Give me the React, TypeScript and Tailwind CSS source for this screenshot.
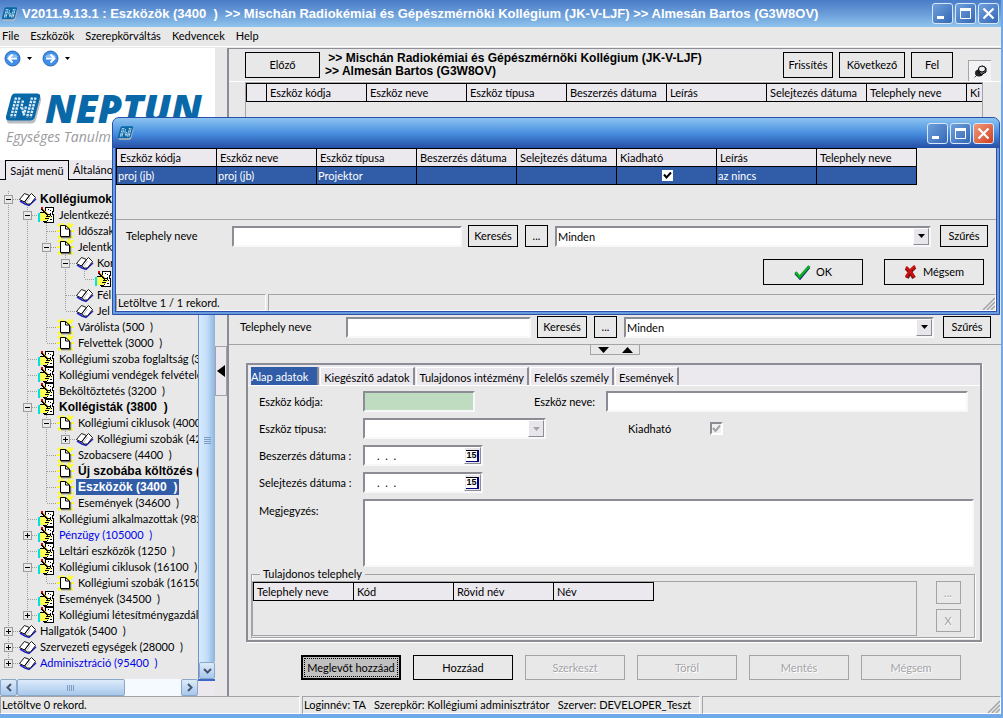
import React from "react";

type IconKind = "book" | "form" | "page";

type TreeNode = {
    level: number;
    icon: IconKind;
    label: string;
    toggle?: "+" | "-";
    tone?: "bold" | "blue" | "selected";
};

const TREE: TreeNode[] = [
    { level: 0, icon: "book", label: "Kollégiumok", toggle: "-", tone: "bold" },
    { level: 1, icon: "form", label: "Jelentkezés", toggle: "-" },
    { level: 2, icon: "page", label: "Időszak" },
    { level: 2, icon: "page", label: "Jelentk", toggle: "-" },
    { level: 3, icon: "book", label: "Kor", toggle: "-" },
    { level: 4, icon: "form", label: "" },
    { level: 3, icon: "book", label: "Fél" },
    { level: 3, icon: "book", label: "Jel" },
    { level: 2, icon: "page", label: "Várólista (500  )" },
    { level: 2, icon: "page", label: "Felvettek (3000  )" },
    { level: 1, icon: "form", label: "Kollégiumi szoba foglaltság (3" },
    { level: 1, icon: "form", label: "Kollégiumi vendégek felvétele" },
    { level: 1, icon: "form", label: "Beköltöztetés (3200  )" },
    { level: 1, icon: "form", label: "Kollégisták (3800  )", toggle: "-", tone: "bold" },
    { level: 2, icon: "page", label: "Kollégiumi ciklusok (4000", toggle: "-" },
    { level: 3, icon: "book", label: "Kollégiumi szobák (42", toggle: "+" },
    { level: 2, icon: "page", label: "Szobacsere (4400  )" },
    { level: 2, icon: "page", label: "Új szobába költözés (", tone: "bold" },
    { level: 2, icon: "page", label: "Eszközök (3400  )", tone: "selected" },
    { level: 2, icon: "page", label: "Események (34600  )" },
    { level: 1, icon: "form", label: "Kollégiumi alkalmazottak (982" },
    { level: 1, icon: "form", label: "Pénzügy (105000  )", toggle: "+", tone: "blue" },
    { level: 1, icon: "form", label: "Leltári eszközök (1250  )" },
    { level: 1, icon: "form", label: "Kollégiumi ciklusok (16100  )", toggle: "-" },
    { level: 2, icon: "page", label: "Kollégiumi szobák (16150" },
    { level: 1, icon: "form", label: "Események (34500  )" },
    { level: 1, icon: "form", label: "Kollégiumi létesítménygazdálk", toggle: "+" },
    { level: 0, icon: "book", label: "Hallgatók (5400  )", toggle: "+" },
    { level: 0, icon: "book", label: "Szervezeti egységek (28000  )", toggle: "+" },
    { level: 0, icon: "book", label: "Adminisztráció (95400  )", toggle: "+", tone: "blue" },
];

const MAIN_COLUMNS = ["Eszköz kódja", "Eszköz neve", "Eszköz típusa", "Beszerzés dátuma", "Leírás", "Selejtezés dátuma", "Telephely neve", "Ki"];
const DIALOG_COLUMNS = ["Eszköz kódja", "Eszköz neve", "Eszköz típusa", "Beszerzés dátuma", "Selejtezés dátuma", "Kiadható", "Leírás", "Telephely neve"];
const SITE_COLUMNS = ["Telephely neve", "Kód", "Rövid név", "Név"];
const TABS = ["Alap adatok", "Kiegészitő adatok", "Tulajdonos intézmény", "Felelős személy", "Események"];
const ACTIONS = ["Meglevőt hozzáad", "Hozzáad", "Szerkeszt", "Töröl", "Mentés", "Mégsem"];

const boldText = "font-['Liberation_Sans',Arial,sans-serif] text-[12px] font-bold";
const sunken = "border-2 border-t-[#8c8c94] border-l-[#8c8c94] border-r-[#f8f8fa] border-b-[#f8f8fa] bg-white";
const flatButton = "flex shrink-0 items-center justify-center border border-black bg-[#e8e8e8] whitespace-nowrap";
const disabledButton = "flex shrink-0 items-center justify-center border border-[#a4a4a8] text-[#a4a4a8] [text-shadow:1px_1px_0_white]";
const headCell = "h-[18px] border border-black bg-[#ebe8ee] p-0 pl-[3px] text-left font-normal whitespace-nowrap overflow-hidden";
const statusCell = "border-t border-l border-t-[#a4a4a8] border-l-[#a4a4a8] border-r border-b border-r-white border-b-white pl-px whitespace-pre";

// does the tree still have a sibling on this level below the given row
function continues(index: number, level: number) {
    for (let i = index + 1; i < TREE.length; i++) {
        if (TREE[i].level < level) return false;
        if (TREE[i].level === level) return true;
    }
    return false;
}

function NeptunMark({ className }: { className: string }) {
    return (
        <svg viewBox="0 0 36 30" className={className} aria-hidden="true">
            <path d="M9 3h23q4 0 3 4l-5 19q-1 4-5 4H4q-4 0-3-4z" fill="#b9bcc0" />
            <path d="M9 0h22q4 0 3 4l-5 19q-1 4-5 4H3q-4 0-3-4L5 4q1-4 4-4z" fill="#0868a8" />
            <g stroke="#dcecf6" strokeWidth="2.4" strokeDasharray="2.4 1" fill="none">
                <path d="M10 4 5 24M13.500 4 8.500 24M17 7l-2 8M20 13l-2 8M26 4l-5 20M29.500 4l-5 20M16 14l2 8" />
            </g>
        </svg>
    );
}

function TreeIcon({ kind }: { kind: IconKind }) {
    if (kind === "book") {
        return (
            <svg width="18" height="16" viewBox="0 0 18 16" className="shrink-0" aria-hidden="true">
                <path d="m1 10 5 3 4 1.500L17 8" fill="none" stroke="#2020d0" strokeWidth="1.500" />
                <path d="M.5 8.500 5.500 2.500l5 2-5 6.500zM10.500 4.500l2-2 4 4-5 6.500h-3l-3-2z" fill="#fff" stroke="#000" strokeWidth=".9" />
                <path d="m11.500 6-4 5.500" stroke="#aaa" strokeWidth=".8" />
            </svg>
        );
    }
    if (kind === "form") {
        return (
            <svg width="18" height="16" viewBox="0 0 18 16" className="shrink-0" shapeRendering="crispEdges" aria-hidden="true">
                <path d="M7.500.5H15.500v4h-1v3h1v8h-9v-10h1z" fill="#fff" stroke="#000" />
                <path d="M10 2.500h1M12 3.500h1M12 6.500h1M13 9.500h1M9 13.500h1M12 12.500h2" stroke="#000" />
                <path d="M0 6h2v9H0z" fill="#00e0e8" />
                <path d="M2 6h6v1h4v2h1v2h-2v2H8v1H2z" fill="#ffff50" />
                <path d="M2 5.500h4M8 7.500h5M8 9.500h4M7 11.500h4M5 14.500h4M12 8.500h1" stroke="#000" />
                <path d="M3 1h1v1h1v1h1v1h1v1h1v1h1v1h1v2h-1V8H8V7H7V6H6V5H5V4H4V3H3z" fill="#000" />
                <path d="M5 2h1v1h1v1h1v1h1v1h1v1H9V6H8V5H7V4H6V3H5z" fill="#f0c000" />
                <path d="M3 0h2v2H3z" fill="#e00000" />
            </svg>
        );
    }
    return (
        <svg width="18" height="16" viewBox="0 0 18 16" className="shrink-0" aria-hidden="true">
            <path d="m1 1 15 14M16 1 1 15M0 8h17M5 0l7 16M12 0 4 16" stroke="#ffff10" strokeWidth="2" />
            <path d="M4 14.500h9.500V7" fill="none" stroke="#777" strokeWidth="1.500" />
            <path d="M3.500 2.500h5L12.500 6v7.500h-9z" fill="#fff" stroke="#000" />
            <path d="M8.500 2.500V6h4" fill="none" stroke="#000" />
        </svg>
    );
}

function TreeRow({ node, index }: { node: TreeNode; index: number }) {
    const tone =
        node.tone === "selected" ? `bg-[#315da8] text-white ${boldText}`
            : node.tone === "bold" ? boldText
                : node.tone === "blue" ? "text-[#0000e8]" : "";
    const more = continues(index, node.level);

    return (
        <li className="flex h-4 items-center">
            {Array.from({ length: node.level }, (_, level) => (
                <svg key={level} width="19" height="16" className="shrink-0" aria-hidden="true">
                    {continues(index, level) && <path d="M8.500 0v16" stroke="#9c9c9c" strokeDasharray="1 1" />}
                </svg>
            ))}
            <svg width="19" height="16" className="shrink-0" aria-hidden="true">
                <path d={more ? "M8.500 0v16" : "M8.500 0v8"} stroke="#9c9c9c" strokeDasharray="1 1" />
                <path d="M9 8.500h10" stroke="#9c9c9c" strokeDasharray="1 1" />
                {node.toggle && (
                    <>
                        <rect x="4.500" y="4.500" width="8" height="8" fill="#e8e8e8" stroke="#9c9c9c" />
                        <path d={node.toggle === "+" ? "M6 8.500h5M8.500 6v5" : "M6 8.500h5"} stroke="#000" />
                    </>
                )}
            </svg>
            <TreeIcon kind={node.icon} />
            <span className={`ml-px px-[2px] leading-4 whitespace-pre ${tone}`}>{node.label}</span>
        </li>
    );
}

function WindowButtons({ close }: { close: string }) {
    const box = "flex h-[21px] w-[21px] items-center justify-center rounded-[3px] border border-[#d8e8fa]";
    return (
        <div className="flex gap-[2px]">
            <button aria-label="Kis méret" className={`${box} bg-linear-to-br from-[#6fa0dc] to-[#3468b4]`}>
                <svg width="15" height="15"><path d="M2 10h7v3H2z" fill="#fff" /></svg>
            </button>
            <button aria-label="Teljes méret" className={`${box} bg-linear-to-br from-[#6fa0dc] to-[#3468b4]`}>
                <svg width="15" height="15"><path d="M2.500 3v9.500h10V3" fill="none" stroke="#fff" /><path d="M2 2h11v3H2z" fill="#fff" /></svg>
            </button>
            <button aria-label="Bezárás" className={`${box} ${close}`}>
                <svg width="15" height="15"><path d="m2.500 2.500 10 10m0-10-10 10" stroke="#fff" strokeWidth="2.200" /></svg>
            </button>
        </div>
    );
}

function Grip() {
    return (
        <svg width="13" height="13" className="self-end" aria-hidden="true">
            <path d="M1 13 13 1M5 13l8-8M9 13l4-4" stroke="#a4a4a8" strokeWidth="1.500" />
        </svg>
    );
}

function Combo({ id, label, value, className, disabled }: { id: string; label?: string; value: string; className: string; disabled?: boolean }) {
    return (
        <div className={`flex h-[21px] ${sunken} ${className}`}>
            <select id={id} aria-label={label} disabled={disabled} className="min-w-0 flex-1 appearance-none bg-white px-px leading-none outline-none">
                <option>{value}</option>
            </select>
            <span className="pointer-events-none flex w-4 items-center justify-center border border-t-white border-l-white border-r-[#8c8c94] border-b-[#8c8c94] bg-[#e8e6ea]">
                <svg width="7" height="4" aria-hidden="true"><path d="M0 0h7L3.500 4z" fill={disabled ? "#a4a4a8" : "#000"} /></svg>
            </span>
        </div>
    );
}

function FilterRow({ id, inputClass, autoFocus }: { id: string; inputClass: string; autoFocus?: boolean }) {
    return (
        <>
            <input id={id} autoFocus={autoFocus} className={`h-[21px] shrink-0 px-px outline-none ${sunken} ${inputClass}`} />
            <button className={`${flatButton} ml-[6px] h-[22px] w-[50px]`}>Keresés</button>
            <button className={`${flatButton} ml-[7px] h-[22px] w-[23px]`}>...</button>
            <Combo id={`${id}-filter`} label="Szűrő" value="Minden" className="ml-[7px] min-w-0 flex-1" />
            <button className={`${flatButton} ml-[9px] h-[22px] w-12`}>Szűrés</button>
        </>
    );
}

function DateField({ id, label }: { id: string; label: string }) {
    return (
        <div className="flex h-[21px] items-center">
            <label htmlFor={id} className="w-[104px]">{label}</label>
            <div className={`flex h-[21px] w-[120px] ${sunken}`}>
                <input id={id} defaultValue=".  .  ." className="w-[99px] pl-3 outline-none" />
                <button aria-label="Naptár" className="flex flex-1 items-center justify-center border border-t-white border-l-white border-r-[#8c8c94] border-b-[#8c8c94] bg-[#e8e6ea]">
                    <span className="flex h-3 items-center border-t border-r-2 border-b border-t-black border-r-[#000080] border-b-[#000080] bg-white font-['Liberation_Sans',Arial,sans-serif] text-[9px] leading-none font-bold">15</span>
                </button>
            </div>
        </div>
    );
}

function NavArrow({ back }: { back?: boolean }) {
    return (
        <div className="flex items-center gap-[6px]">
            <button aria-label={back ? "Vissza" : "Előre"}>
                <svg width="17" height="17" className="block">
                    <circle cx="8.500" cy="8.500" r="7.500" fill="#3f8ee8" stroke="#2f68b8" />
                    <path d="M3 7a6 5 0 0 1 11 0z" fill="#8cc0f4" />
                    <path d={back ? "M13 8.500H5M8.500 4.500l-4 4 4 4" : "M4 8.500h8M8.500 4.500l4 4-4 4"} fill="none" stroke="#fff" strokeWidth="2" />
                </svg>
            </button>
            <svg width="5" height="3" aria-hidden="true"><path d="M0 0h5L2.500 3z" /></svg>
        </div>
    );
}

const scrollPart = "flex items-center justify-center rounded-[2px] border border-[#8ca8c8] bg-linear-to-b from-[#dcebfa] to-[#a8c8ec]";

function Sidebar() {
    return (
        <aside className="flex w-[215px] shrink-0 flex-col">
            <div className="h-28 bg-white">
                <div className="flex gap-[10px] px-1 pt-[2px]">
                    <NavArrow back />
                    <NavArrow />
                </div>
                <div className="mt-[20px] flex items-center gap-[3px] pl-[6px]">
                    <NeptunMark className="h-[31px] w-9" />
                    <span className="font-['Open_Sans',sans-serif] text-[39px] leading-[42px] font-extrabold text-[#0868a8] italic">NEPTUN</span>
                </div>
                <p className="pl-[6px] font-['Open_Sans',sans-serif] text-[14px] leading-4 whitespace-nowrap text-[#9a9a9e] italic">Egységes Tanulm</p>
            </div>
            <div className="flex h-[20px] items-end bg-[#ebe8ee]">
                <span className="h-px w-[5px] bg-black" />
                <button className="h-[20px] w-16 border border-b-0 border-black">Saját menü</button>
                <button className="h-[20px] flex-1 border-b border-black pl-1 text-left">Általáno</button>
            </div>
            <div className="flex flex-1">
                <ul className="w-[198px] overflow-hidden pt-[11px]">
                    {TREE.map((node, i) => <TreeRow key={i} node={node} index={i} />)}
                </ul>
                <div className="flex w-[17px] flex-col border-l border-[#6a94cc]">
                    <div className="flex flex-1 flex-col items-center justify-center bg-linear-to-r from-[#d8eafc] via-[#c4def8] to-[#8cb4e0] pt-10">
                        <svg width="7" height="8" aria-hidden="true"><path d="M0 .5h7M0 2.500h7M0 4.500h7M0 6.500h7" stroke="#7c9cc8" /></svg>
                    </div>
                    <button aria-label="Le" className={`h-[17px] ${scrollPart}`}>
                        <svg width="9" height="6"><path d="m1 1 3.500 3.500L8 1" fill="none" stroke="#46566c" strokeWidth="2" /></svg>
                    </button>
                </div>
            </div>
            <div className="flex h-[17px]">
                <button aria-label="Balra" className={`w-[17px] ${scrollPart}`}>
                    <svg width="6" height="9"><path d="M5 1 1.500 4.500 5 8" fill="none" stroke="#46566c" strokeWidth="2" /></svg>
                </button>
                <div className={`w-[108px] ${scrollPart}`}>
                    <svg width="8" height="6" aria-hidden="true"><path d="M.5 0v6M2.500 0v6M4.500 0v6M6.500 0v6" stroke="#7c9cc8" /></svg>
                </div>
                <div className="flex-1 bg-[#f4faff]" />
                <button aria-label="Jobbra" className={`w-[17px] ${scrollPart}`}>
                    <svg width="6" height="9"><path d="m1 1 3.500 3.500L1 8" fill="none" stroke="#46566c" strokeWidth="2" /></svg>
                </button>
                <span className="w-[17px] border-t-2 border-[#3c68c8] bg-[#ebe8ee]" />
            </div>
        </aside>
    );
}

function DetailTabs() {
    return (
        <section className="mr-[19px] ml-[17px] border-2 border-[#8c8c94] shadow-[1px_1px_0_white]">
            <div role="tablist" className="flex h-[21px] items-end gap-px border-b border-white bg-[#ebe8ee] pl-[3px]">
                {TABS.map((tab, i) => (
                    <button
                        key={tab}
                        role="tab"
                        aria-selected={i === 0}
                        className={i === 0
                            ? "h-[18px] border-r-2 border-[#8c8c94] bg-[#315da8] pr-[9px] leading-none text-white"
                            : "h-[18px] border-t border-l border-r-2 border-t-white border-l-white border-r-[#8c8c94] px-[3px] pt-px leading-none whitespace-nowrap"}
                    >
                        {tab}
                    </button>
                ))}
            </div>
            <div className="flex flex-col gap-[6px] pt-[5px] pr-[6px] pl-[11px]">
                <div className="flex h-[21px] items-center pr-[6px]">
                    <label htmlFor="code" className="w-[104px]">Eszköz kódja:</label>
                    <input id="code" className="h-[21px] w-28 border-2 border-t-[#8c8c94] border-l-[#8c8c94] border-r-[#f8f8fa] border-b-[#f8f8fa] bg-[#c0dcc0]" />
                    <label htmlFor="name" className="ml-[59px] w-[72px]">Eszköz neve:</label>
                    <input id="name" className={`h-[21px] min-w-0 flex-1 ${sunken}`} />
                </div>
                <div className="flex h-[21px] items-center">
                    <label htmlFor="type" className="w-[104px]">Eszköz típusa:</label>
                    <Combo id="type" value="" className="w-[183px]" disabled />
                    <label htmlFor="lendable" className="ml-[82px] w-[82px]">Kiadható</label>
                    <input
                        id="lendable"
                        type="checkbox"
                        defaultChecked
                        disabled
                        className="h-[13px] w-[13px] appearance-none border-2 border-t-[#8c8c94] border-l-[#8c8c94] border-r-white border-b-white bg-[#f0f0f0]"
                    />
                    <svg width="9" height="9" className="pointer-events-none -ml-[11px]" aria-hidden="true"><path d="m1 4 2.500 3L8 1.500" fill="none" stroke="#a4a4a8" strokeWidth="2" /></svg>
                </div>
                <DateField id="bought" label="Beszerzés dátuma :" />
                <DateField id="scrapped" label="Selejtezés dátuma :" />
                <div className="flex">
                    <label htmlFor="note" className="w-[104px] pt-[5px]">Megjegyzés:</label>
                    <textarea id="note" className={`h-[68px] min-w-0 flex-1 resize-none ${sunken}`} />
                </div>
            </div>
            <fieldset className="mr-[5px] mb-[2px] ml-[3px] flex border border-[#a4a4a8] pb-px shadow-[inset_1px_0_0_white,1px_1px_0_white]">
                <legend className="ml-2 px-[3px] leading-[14px]">Tulajdonos telephely</legend>
                <div className="h-[55px] flex-1 border border-[#a4a4a8]">
                    <table className="table-fixed border-collapse">
                        <thead>
                            <tr>{SITE_COLUMNS.map(c => <th key={c} className={`${headCell} w-[100px]`}>{c}</th>)}</tr>
                        </thead>
                    </table>
                </div>
                <div className="flex w-[57px] flex-col items-center gap-[5px] pl-[5px]">
                    <button disabled className={`${disabledButton} h-[23px] w-[25px]`}>...</button>
                    <button disabled className={`${disabledButton} h-[23px] w-[25px]`}>X</button>
                </div>
            </fieldset>
        </section>
    );
}

function MainPanel() {
    return (
        <main className="flex min-w-0 flex-1 flex-col border-t border-l-2 border-[#8c8c94]">
            <div className="flex h-[33px] items-start border-b border-white pt-[3px] pr-[10px] pl-4">
                <button className={`${flatButton} h-[26px] w-[75px]`}>Előző</button>
                <p className={`min-w-0 flex-1 pl-[5px] leading-[13px] whitespace-pre ${boldText}`}>{" >> Mischán Radiokémiai és Gépészmérnöki Kollégium (JK-V-LJF)\n>> Almesán Bartos (G3W8OV)"}</p>
                <button className={`${flatButton} h-[26px] w-[50px]`}>Frissítés</button>
                <button className={`${flatButton} ml-[6px] h-[26px] w-[66px]`}>Következő</button>
                <button className={`${flatButton} ml-[6px] h-[26px] w-[42px]`}>Fel</button>
                <button aria-label="Rögzítés" className="mt-2 ml-[15px] flex h-[21px] w-[23px] items-center justify-center border-t border-l border-[#a4a4a8] bg-[#f3f2f5]">
                    <svg width="14" height="13">
                        <path d="m4.500 9.500-3 3" stroke="#555" />
                        <ellipse cx="6" cy="8" rx="4" ry="3.500" fill="#222" />
                        <path d="M5 5 9 1l4 2v4L8 10z" fill="#777" stroke="#000" />
                        <ellipse cx="9" cy="4" rx="3.500" ry="3" fill="#eee" stroke="#000" />
                    </svg>
                </button>
            </div>
            <div className="mr-[18px] ml-4 h-[228px] overflow-hidden border border-[#a4a4a8]">
                <table className="w-[820px] table-fixed border-collapse">
                    <thead>
                        <tr>
                            <th className={`${headCell} w-[20px]`} />
                            {MAIN_COLUMNS.map(c => <th key={c} className={`${headCell} w-[100px]`}>{c}</th>)}
                        </tr>
                    </thead>
                </table>
            </div>
            <div className="flex h-[35px] items-center border-b border-[#a4a4a8] pr-[10px] pl-[11px]">
                <label htmlFor="site" className="w-[106px] shrink-0">Telephely neve</label>
                <FilterRow id="site" inputClass="w-[185px]" />
            </div>
            <button aria-label="Panel méretezése" className="flex h-[10px] w-[50px] items-center justify-around self-center border border-t-0 border-[#a4a4a8]">
                <svg width="11" height="6"><path d="M0 0h11L5.500 6z" /></svg>
                <svg width="11" height="6"><path d="M0 6h11L5.500 0z" /></svg>
            </button>
            <div className="h-2" />
            <DetailTabs />
            <div className="flex flex-1 items-start gap-3 pt-[13px] pb-[14px] pl-[72px]">
                {ACTIONS.map((action, i) => (
                    <button
                        key={action}
                        disabled={i > 1}
                        className={i === 0
                            ? "flex h-[25px] w-[100px] items-center justify-center border-2 border-black bg-[#c0c0c0] whitespace-nowrap outline-1 -outline-offset-4 outline-black outline-dotted"
                            : i === 1 ? `${flatButton} h-[25px] w-[100px]` : `${disabledButton} h-[25px] w-[100px]`}
                    >
                        {action}
                    </button>
                ))}
            </div>
        </main>
    );
}

function DeviceDialog() {
    return (
        <div role="dialog" aria-label="Eszköz választás" className="absolute top-[117px] right-px left-[112px] rounded-t-[7px] border border-[#2850a8] bg-[#6c9ce0]">
            <div className="flex h-[30px] items-center justify-between rounded-t-[6px] bg-linear-to-b from-[#8cc4f0] via-[#4a90e0] via-50% to-[#264ea6] pr-[5px] pl-[5px]">
                <NeptunMark className="h-[14px] w-4" />
                <WindowButtons close="bg-linear-to-br from-[#f09878] to-[#d03c18]" />
            </div>
            <div className="mx-[2px] mb-[2px] border-x border-b border-[#2850a8] bg-[#e8e8e8]">
                <div className="h-[72px] border-b border-[#a4a4a8]">
                    <table className="w-[801px] table-fixed border-collapse">
                        <thead>
                            <tr>{DIALOG_COLUMNS.map(c => <th key={c} className={headCell}>{c}</th>)}</tr>
                        </thead>
                        <tbody>
                            <tr className="bg-[#315da8] text-white">
                                {["proj (jb)", "proj (jb)", "Projektor", "", "", "check", "az nincs", ""].map((cell, i) => (
                                    <td key={i} className="h-[18px] border border-black p-0 pl-px">
                                        {cell === "check" ? (
                                            <div className="flex justify-center">
                                                <input type="checkbox" defaultChecked aria-label="Kiadható" className="h-[11px] w-[11px] appearance-none bg-white" />
                                                <svg width="9" height="9" className="pointer-events-none mt-px -ml-[10px]" aria-hidden="true"><path d="m1 3.500 2.500 3L8 1.500" fill="none" stroke="#000" strokeWidth="2" /></svg>
                                            </div>
                                        ) : cell}
                                    </td>
                                ))}
                            </tr>
                        </tbody>
                    </table>
                </div>
                <div className="flex items-center pt-[5px] pr-2 pl-[10px]">
                    <label htmlFor="search" className="w-[106px] shrink-0">Telephely neve</label>
                    <FilterRow id="search" inputClass="w-[230px]" autoFocus />
                </div>
                <div className="flex justify-end gap-[21px] pt-3 pr-3 pb-[9px]">
                    <button className={`${flatButton} h-[26px] w-[100px] gap-[5px]`}>
                        <svg width="17" height="15" aria-hidden="true"><path d="m1.500 8 4.500 5L15 2" fill="none" stroke="#103070" strokeWidth="3" /><path d="m1.500 7 4 5L15.500 1" fill="none" stroke="#0cb020" strokeWidth="2.600" /></svg>
                        OK
                    </button>
                    <button className={`${flatButton} h-[26px] w-[100px] gap-[6px]`}>
                        <svg width="13" height="15" aria-hidden="true"><path d="M2 3q5 4 8 10M11 2Q6 6 3 13" fill="none" stroke="#701010" strokeWidth="4" /><path d="M2 2q5 4 8 10M11 1Q6 5 2 12" fill="none" stroke="#d01010" strokeWidth="2.600" /></svg>
                        Mégsem
                    </button>
                </div>
                <div className="flex h-[17px] gap-[2px] leading-4">
                    <span className={`${statusCell} w-[150px]`}>Letöltve 1 / 1 rekord.</span>
                    <span className={`${statusCell} flex flex-1 justify-end`}><Grip /></span>
                </div>
            </div>
        </div>
    );
}

export default function App() {
    return (
        <div className="relative flex min-h-screen flex-col overflow-hidden border-r-2 border-b-4 border-[#70a8e8] bg-[#e8e8e8] font-[Lato,Arial,sans-serif] text-[11px] leading-[14px] text-black">
            <header className="flex h-[27px] items-center justify-between bg-linear-to-b from-[#4a7cc8] via-[#6a9cd8] to-[#90c4ec] pr-[2px] pl-[2px]">
                <div className="flex items-center gap-1">
                    <NeptunMark className="h-[14px] w-4" />
                    <h1 className="font-['Liberation_Sans',Arial,sans-serif] text-[13px] font-bold whitespace-pre text-white">{"V2011.9.13.1 : Eszközök (3400  )  >> Mischán Radiokémiai és Gépészmérnöki Kollégium (JK-V-LJF) >> Almesán Bartos (G3W8OV)"}</h1>
                </div>
                <WindowButtons close="bg-linear-to-br from-[#6fa0dc] to-[#3468b4]" />
            </header>
            <nav className="flex h-5 items-center gap-[11px] border-b border-white pb-px pl-[2px]">
                {["File", "Eszközök", "Szerepkörváltás", "Kedvencek", "Help"].map(item => <button key={item}>{item}</button>)}
            </nav>
            <div className="flex flex-1 pt-px">
                <Sidebar />
                <button aria-label="Menü elrejtése" className="mt-[298px] flex h-[50px] w-3 shrink-0 items-center justify-center border border-[#a4a4a8] bg-[#ebe8ee]">
                    <svg width="8" height="12"><path d="M8 0v12L0 6z" /></svg>
                </button>
                <MainPanel />
            </div>
            <footer className="flex h-[18px] gap-[2px] leading-4">
                <span className={`${statusCell} w-[300px]`}>Letöltve 0 rekord.</span>
                <span className={`${statusCell} w-[398px]`}>{"Loginnév: TA   Szerepkör: Kollégiumi adminisztrátor   Szerver: DEVELOPER_Teszt"}</span>
                <span className={`${statusCell} flex flex-1 justify-end`}><Grip /></span>
            </footer>
            <DeviceDialog />
        </div>
    );
}
